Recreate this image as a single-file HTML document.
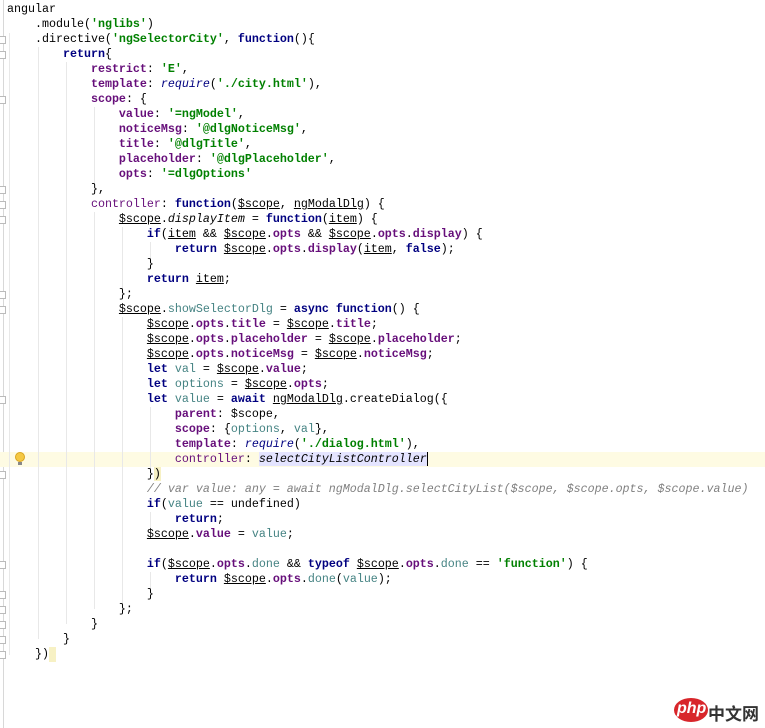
<!DOCTYPE html>
<html><head><meta charset="utf-8"><style>
html,body{margin:0;padding:0;background:#fff;width:765px;height:728px;overflow:hidden;position:relative}
#code{position:absolute;left:0;top:2px;font-family:"Liberation Mono",monospace;font-size:11.67px;line-height:15px;color:#000;font-weight:bold}
.l{height:15px;white-space:pre;padding-left:7px;position:relative}
.k{color:#000080;font-weight:bold}
.s{color:#008000;font-weight:bold}
.p{color:#660e7a;font-weight:bold}
.pn{color:#660e7a;font-weight:normal}
.v{color:#458383;font-weight:normal}
.n{font-weight:normal}
.u{text-decoration:underline;font-weight:normal}
.i{font-style:italic;font-weight:normal}
.c{color:#808080;font-style:italic;font-weight:normal}
.g{position:absolute;width:1px;background:#e8e8e8}
#gut{position:absolute;left:3px;top:0;width:1px;height:728px;background:#d8d8d8}
.f{position:absolute;left:0;width:6px;height:8px;border:1px solid #bbb;border-left:none;background:#fff;box-sizing:border-box}
</style></head><body>
<div id="gut"></div>
<div style="position:absolute;left:0;top:452px;width:765px;height:15px;background:#fefbe3"></div>
<div class="g" style="left:9px;top:33px;height:622px"></div>
<div class="g" style="left:38px;top:47px;height:592px"></div>
<div class="g" style="left:66px;top:62px;height:562px"></div>
<div class="g" style="left:94px;top:107px;height:77px"></div>
<div class="g" style="left:94px;top:212px;height:397px"></div>
<div class="g" style="left:122px;top:227px;height:62px"></div>
<div class="g" style="left:122px;top:317px;height:292px"></div>
<div class="g" style="left:150px;top:242px;height:17px"></div>
<div class="g" style="left:150px;top:407px;height:62px"></div>
<div class="g" style="left:150px;top:512px;height:17px"></div>
<div class="g" style="left:150px;top:572px;height:17px"></div>
<div class="f" style="top:36px"></div><div class="f" style="top:51px"></div><div class="f" style="top:96px"></div><div class="f" style="top:186px"></div><div class="f" style="top:201px"></div><div class="f" style="top:216px"></div><div class="f" style="top:291px"></div><div class="f" style="top:306px"></div><div class="f" style="top:396px"></div><div class="f" style="top:471px"></div><div class="f" style="top:561px"></div><div class="f" style="top:591px"></div><div class="f" style="top:606px"></div><div class="f" style="top:621px"></div><div class="f" style="top:636px"></div><div class="f" style="top:651px"></div>
<div style="position:absolute;left:15px;top:452px;width:10px;height:10px;border-radius:50%;background:#f5c842;border:1px solid #d9a520;box-sizing:border-box"></div>
<div style="position:absolute;left:18px;top:462px;width:4px;height:3px;background:#888"></div>
<div id="code">
<div class="l"><span class="n">angular</span></div>
<div class="l">    <span class="n">.module(</span><span class="s">'nglibs'</span><span class="n">)</span></div>
<div class="l">    <span class="n">.directive(</span><span class="s">'ngSelectorCity'</span><span class="n">, </span><span class="k">function</span><span class="n">(){</span></div>
<div class="l">        <span class="k">return</span><span class="n">{</span></div>
<div class="l">            <span class="p">restrict</span><span class="n">: </span><span class="s">'E'</span><span class="n">,</span></div>
<div class="l">            <span class="p">template</span><span class="n">: </span><span class="i k" style="font-weight:normal">require</span><span class="n">(</span><span class="s">'./city.html'</span><span class="n">),</span></div>
<div class="l">            <span class="p">scope</span><span class="n">: {</span></div>
<div class="l">                <span class="p">value</span><span class="n">: </span><span class="s">'=ngModel'</span><span class="n">,</span></div>
<div class="l">                <span class="p">noticeMsg</span><span class="n">: </span><span class="s">'@dlgNoticeMsg'</span><span class="n">,</span></div>
<div class="l">                <span class="p">title</span><span class="n">: </span><span class="s">'@dlgTitle'</span><span class="n">,</span></div>
<div class="l">                <span class="p">placeholder</span><span class="n">: </span><span class="s">'@dlgPlaceholder'</span><span class="n">,</span></div>
<div class="l">                <span class="p">opts</span><span class="n">: </span><span class="s">'=dlgOptions'</span></div>
<div class="l">            <span class="n">},</span></div>
<div class="l">            <span class="pn">controller</span><span class="n">: </span><span class="k">function</span><span class="n">(</span><span class="u">$scope</span><span class="n">, </span><span class="u">ngModalDlg</span><span class="n">) {</span></div>
<div class="l">                <span class="u">$scope</span><span class="n">.</span><span class="i">displayItem</span><span class="n"> = </span><span class="k">function</span><span class="n">(</span><span class="u">item</span><span class="n">) {</span></div>
<div class="l">                    <span class="k">if</span><span class="n">(</span><span class="u">item</span><span class="n"> &amp;&amp; </span><span class="u">$scope</span><span class="n">.</span><span class="p">opts</span><span class="n"> &amp;&amp; </span><span class="u">$scope</span><span class="n">.</span><span class="p">opts</span><span class="n">.</span><span class="p">display</span><span class="n">) {</span></div>
<div class="l">                        <span class="k">return</span><span class="n"> </span><span class="u">$scope</span><span class="n">.</span><span class="p">opts</span><span class="n">.</span><span class="p">display</span><span class="n">(</span><span class="u">item</span><span class="n">, </span><span class="k">false</span><span class="n">);</span></div>
<div class="l">                    <span class="n">}</span></div>
<div class="l">                    <span class="k">return</span><span class="n"> </span><span class="u">item</span><span class="n">;</span></div>
<div class="l">                <span class="n">};</span></div>
<div class="l">                <span class="u">$scope</span><span class="n">.</span><span class="v">showSelectorDlg</span><span class="n"> = </span><span class="k">async function</span><span class="n">() {</span></div>
<div class="l">                    <span class="u">$scope</span><span class="n">.</span><span class="p">opts</span><span class="n">.</span><span class="p">title</span><span class="n"> = </span><span class="u">$scope</span><span class="n">.</span><span class="p">title</span><span class="n">;</span></div>
<div class="l">                    <span class="u">$scope</span><span class="n">.</span><span class="p">opts</span><span class="n">.</span><span class="p">placeholder</span><span class="n"> = </span><span class="u">$scope</span><span class="n">.</span><span class="p">placeholder</span><span class="n">;</span></div>
<div class="l">                    <span class="u">$scope</span><span class="n">.</span><span class="p">opts</span><span class="n">.</span><span class="p">noticeMsg</span><span class="n"> = </span><span class="u">$scope</span><span class="n">.</span><span class="p">noticeMsg</span><span class="n">;</span></div>
<div class="l">                    <span class="k">let</span><span class="n"> </span><span class="v">val</span><span class="n"> = </span><span class="u">$scope</span><span class="n">.</span><span class="p">value</span><span class="n">;</span></div>
<div class="l">                    <span class="k">let</span><span class="n"> </span><span class="v">options</span><span class="n"> = </span><span class="u">$scope</span><span class="n">.</span><span class="p">opts</span><span class="n">;</span></div>
<div class="l">                    <span class="k">let</span><span class="n"> </span><span class="v">value</span><span class="n"> = </span><span class="k">await</span><span class="n"> </span><span class="u">ngModalDlg</span><span class="n">.createDialog({</span></div>
<div class="l">                        <span class="p">parent</span><span class="n">: $scope,</span></div>
<div class="l">                        <span class="p">scope</span><span class="n">: {</span><span class="v">options</span><span class="n">, </span><span class="v">val</span><span class="n">},</span></div>
<div class="l">                        <span class="p">template</span><span class="n">: </span><span class="i k" style="font-weight:normal">require</span><span class="n">(</span><span class="s">'./dialog.html'</span><span class="n">),</span></div>
<div class="l">                        <span class="pn">controller</span><span class="n">: </span><span class="i" style="background:#e4e4ff">selectCityListController</span><span style="border-left:1.5px solid #000"></span></div>
<div class="l">                    <span class="n">}</span><span class="n" style="background:#f7f1c4">)</span></div>
<div class="l">                    <span class="c">// var value: any = await ngModalDlg.selectCityList($scope, $scope.opts, $scope.value)</span></div>
<div class="l">                    <span class="k">if</span><span class="n">(</span><span class="v">value</span><span class="n"> == undefined)</span></div>
<div class="l">                        <span class="k">return</span><span class="n">;</span></div>
<div class="l">                    <span class="u">$scope</span><span class="n">.</span><span class="p">value</span><span class="n"> = </span><span class="v">value</span><span class="n">;</span></div>
<div class="l"> </div>
<div class="l">                    <span class="k">if</span><span class="n">(</span><span class="u">$scope</span><span class="n">.</span><span class="p">opts</span><span class="n">.</span><span class="v">done</span><span class="n"> &amp;&amp; </span><span class="k">typeof</span><span class="n"> </span><span class="u">$scope</span><span class="n">.</span><span class="p">opts</span><span class="n">.</span><span class="v">done</span><span class="n"> == </span><span class="s">'function'</span><span class="n">) {</span></div>
<div class="l">                        <span class="k">return</span><span class="n"> </span><span class="u">$scope</span><span class="n">.</span><span class="p">opts</span><span class="n">.</span><span class="v">done</span><span class="n">(</span><span class="v">value</span><span class="n">);</span></div>
<div class="l">                    <span class="n">}</span></div>
<div class="l">                <span class="n">};</span></div>
<div class="l">            <span class="n">}</span></div>
<div class="l">        <span class="n">}</span></div>
<div class="l">    <span class="n">})</span><span style="display:inline-block;width:7px;height:15px;background:#f7f1c4;vertical-align:top"></span></div>
</div>
<div style="position:absolute;left:674px;top:698px;width:34px;height:24px;border-radius:50%;background:#d8262b"></div>
<div style="position:absolute;left:677px;top:700px;font-family:'Liberation Sans',sans-serif;font-size:16px;font-style:italic;color:#fff;font-weight:bold">php</div>
<div style="position:absolute;left:708px;top:700px;font-family:'Liberation Sans','Noto Sans CJK SC',sans-serif;font-size:17px;color:#333;font-weight:bold">中文网</div>
</body></html>
